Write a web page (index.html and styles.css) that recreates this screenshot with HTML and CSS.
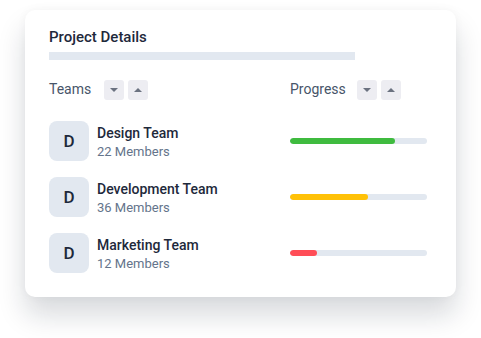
FILE: index.html
```html
<!DOCTYPE html>
<html lang="en">

<head>
    <meta charset="UTF-8">
    <meta name="viewport" content="width=device-width, initial-scale=1.0">
    <title>Project Details</title>
    <link rel="stylesheet" href="styles.css">
</head>

<body>
    <main class="card">
        <h3 class="title">Project Details</h3>
        <div class="title-bar"></div>

        <div class="head">
            <div class="col">
                <span>Teams</span>
                <button class="sort"><i class="down"></i></button>
                <button class="sort"><i class="up"></i></button>
            </div>
            <div class="col">
                <span>Progress</span>
                <button class="sort"><i class="down"></i></button>
                <button class="sort"><i class="up"></i></button>
            </div>
        </div>

        <div class="teams">
            <div class="team">
                <div class="info">
                    <div class="avatar">D</div>
                    <div>
                        <h4>Design Team</h4>
                        <p>22 Members</p>
                    </div>
                </div>
                <div class="progress"><div class="fill green" style="width: 77%"></div></div>
            </div>
            <div class="team">
                <div class="info">
                    <div class="avatar">D</div>
                    <div>
                        <h4>Development Team</h4>
                        <p>36 Members</p>
                    </div>
                </div>
                <div class="progress"><div class="fill yellow" style="width: 57%"></div></div>
            </div>
            <div class="team">
                <div class="info">
                    <div class="avatar">D</div>
                    <div>
                        <h4>Marketing Team</h4>
                        <p>12 Members</p>
                    </div>
                </div>
                <div class="progress"><div class="fill red" style="width: 20%"></div></div>
            </div>
        </div>
    </main>
</body>

</html>
```

FILE: styles.css
```css
* {
    margin: 0;
    padding: 0;
    box-sizing: border-box;
}

html,
body {
    background: #fff;
}

body {
    min-height: 100vh;
    font-family: Roboto, "Noto Sans", sans-serif;
    color: #1e293b;
    padding: 10px 25px;
}

.card {
    width: 431px;
    height: 287px;
    background: #fff;
    border-radius: 10px;
    padding: 17px 24px 24px;
    box-shadow: 0 18px 28px rgba(15, 23, 42, 0.16), 0 0 10px rgba(15, 23, 42, 0.04);
}

.title {
    font-size: 15px;
    font-weight: 500;
    line-height: 20px;
}

.title-bar {
    width: 306px;
    height: 8px;
    margin-top: 5px;
    background: #e2e8f0;
}

.head,
.team {
    display: grid;
    grid-template-columns: 241px 137px;
}

.head {
    margin-top: 20px;
    margin-bottom: 21px;
}

.col {
    display: flex;
    align-items: center;
    gap: 4px;
    height: 20px;
}

.col span {
    font-size: 14px;
    line-height: 18px;
    margin-top: -2px;
    color: #475569;
    margin-right: 9px;
}

.col:last-child span {
    margin-right: 7px;
}

.sort {
    width: 20px;
    height: 20px;
    border: none;
    border-radius: 3px;
    background: #ededf2;
    display: flex;
    align-items: center;
    justify-content: center;
}

.sort i {
    width: 0;
    height: 0;
    border-left: 4px solid transparent;
    border-right: 4px solid transparent;
}

.sort .down {
    border-top: 4px solid #6b7280;
}

.sort .up {
    border-bottom: 4px solid #6b7280;
}

.teams {
    display: flex;
    flex-direction: column;
    gap: 16px;
}

.team {
    align-items: center;
}

.info {
    display: flex;
    align-items: center;
    gap: 8px;
}

.avatar {
    width: 40px;
    height: 40px;
    border-radius: 8px;
    background: #e2e8f0;
    display: flex;
    align-items: center;
    justify-content: center;
    font-size: 17px;
    font-weight: 500;
    color: #1e293b;
}

.info h4 {
    font-size: 14px;
    font-weight: 500;
    line-height: 20px;
}

.info p {
    font-size: 13px;
    line-height: 17px;
    color: #64748b;
}

.progress {
    height: 6px;
    border-radius: 3px;
    background: #e2e8f0;
    overflow: hidden;
}

.fill {
    height: 100%;
    border-radius: 3px;
}

.green {
    background: #3fbb3f;
}

.yellow {
    background: #ffc107;
}

.red {
    background: #ff4d57;
}
```
